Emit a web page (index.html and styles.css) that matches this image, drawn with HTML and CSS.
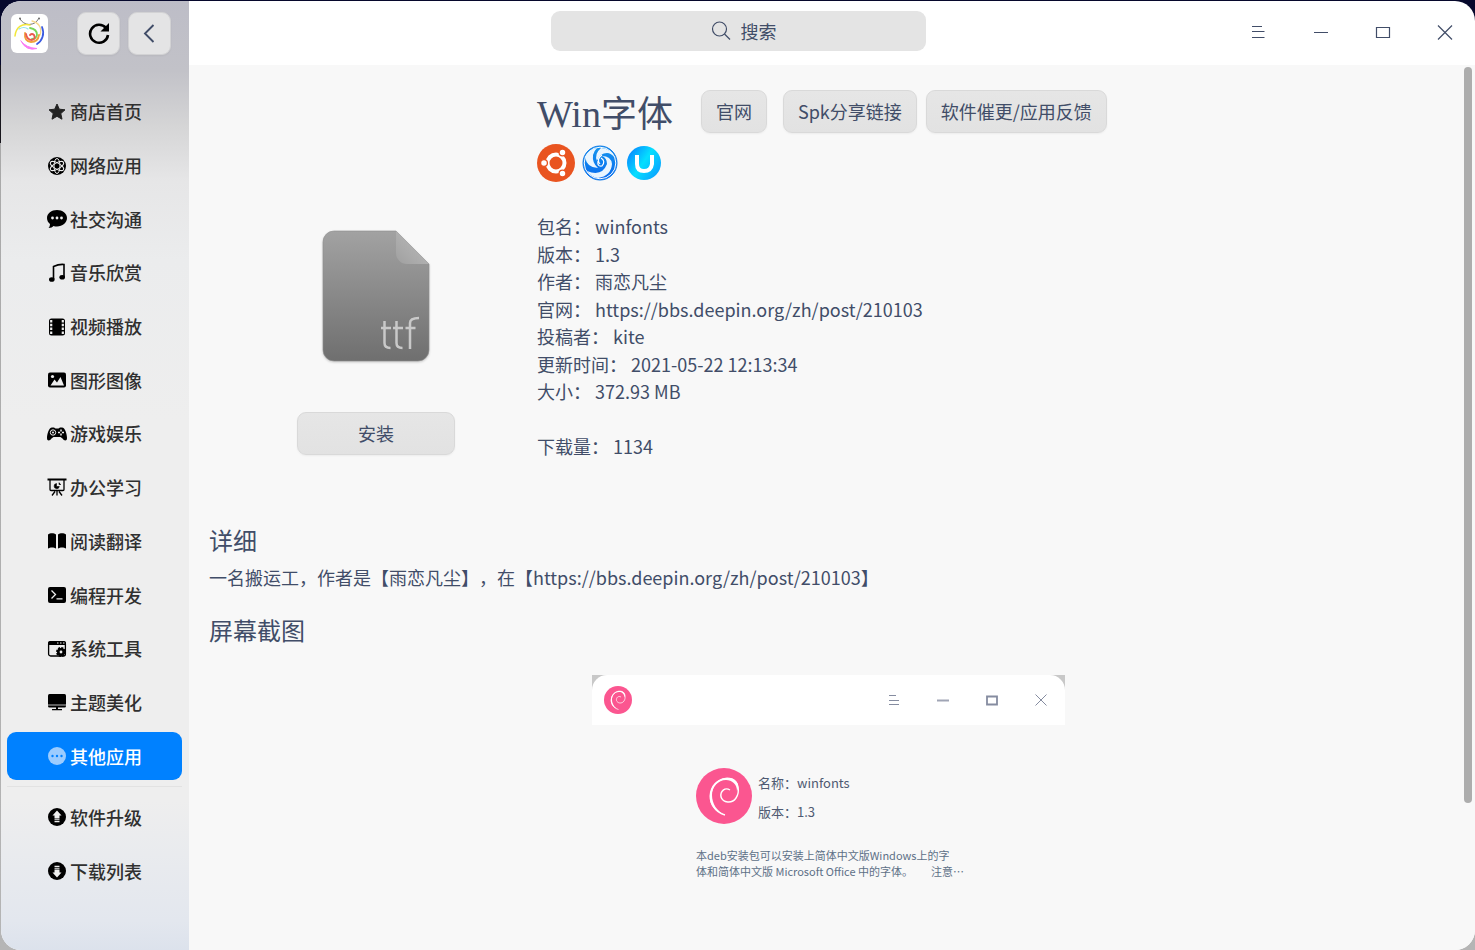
FILE: index.html
```html
<!DOCTYPE html>
<html lang="zh-CN">
<head>
<meta charset="utf-8">
<title>Win字体</title>
<link rel="stylesheet" href="styles.css">
</head>
<body>
<div class="window">
  <header class="titlebar">
    <div class="tools">
      <svg class="logo" viewBox="0 0 37 39" fill="none" stroke-linecap="round">
        <rect width="37" height="39" rx="6" fill="#fff"/>
        <path d="M9 5q3 5 9 5.500q7-.5 9-5" stroke="#777" stroke-width="1"/>
        <circle cx="9" cy="4.500" r="1" fill="#666"/><circle cx="28" cy="4.500" r="1" fill="#666"/>
        <path d="M4 22C5 13 11 9 19 11" stroke="#f2e73b" stroke-width="1.500"/>
        <path d="M21 7C29 9 31 15 29 21" stroke="#f7d98b" stroke-width="1.300"/>
        <path d="M31 13C34 20 31 27 26 30" stroke="#3c5be0" stroke-width="1.800"/>
        <path d="M8 15q5-3 9 0" stroke="#8fe3ef" stroke-width="1.200"/>
        <path d="M19 14q7 1 7 7q-1 4-5 4" stroke="#7ad65a" stroke-width="1.800"/>
        <path d="M14 19q-1 8 6 9q7 0 8-7" stroke="#f2a03c" stroke-width="1.800"/>
        <path d="M15 20q1 6 6 6q4-1 2-5q-2-2-4 0" stroke="#ea5a50" stroke-width="1.800"/>
        <path d="M10 27Q15 34 26 34.500Q15 37.500 10 27Z" fill="#f97cf4" stroke="#f97cf4" stroke-width="1"/>
      </svg>
      <button class="btn square" aria-label="刷新"><svg viewBox="0 0 24 24" width="24" height="24" fill="none" stroke="#000" stroke-width="2.600"><path d="M19 7A9 9 0 1 0 21 14"/><path d="M22 2v8.500h-8.500z" fill="#000" stroke="none"/></svg></button>
      <button class="btn square" aria-label="返回"><svg viewBox="0 0 24 24" width="24" height="24" fill="none" stroke="#414d68" stroke-width="1.900"><path d="M15.500 4L7 12.500l8.500 8.500"/></svg></button>
    </div>
    <label class="search">
      <svg viewBox="0 0 20 20" width="20" height="20" fill="none" stroke="#414d68" stroke-width="1.200"><circle cx="8.500" cy="8" r="7"/><path d="M13.500 13l5.500 5.500"/></svg>
      <input type="text" placeholder="搜索" aria-label="搜索">
    </label>
    <div class="controls">
      <button aria-label="菜单"><svg viewBox="0 0 16 16"><path d="M1 2.500h10M1 7.500h12.500M1 13.500h12.500"/></svg></button>
      <button aria-label="最小化"><svg viewBox="0 0 16 16"><path d="M1 8.500h14"/></svg></button>
      <button aria-label="最大化"><svg viewBox="0 0 16 16"><path d="M1.500 3.500h13v10h-13z"/></svg></button>
      <button aria-label="关闭"><svg viewBox="0 0 16 16"><path d="M1 1.500l14 14M15 1.500l-14 14"/></svg></button>
    </div>
  </header>

  <aside class="sidebar">
    <nav class="categories">
      <button><svg viewBox="0 0 20 20"><path fill="#222" stroke="#222" stroke-linejoin="round" d="M10 2l2.300 5.200 5.700.6-4.200 3.800 1.200 5.600L10 14.300 5 17.200l1.200-5.600L2 7.800l5.700-.6z"/></svg>商店首页</button>
      <button><svg viewBox="0 0 20 20"><circle cx="10" cy="10" r="9"/><g fill="none" stroke="#eee" stroke-width="1"><ellipse cx="10" cy="10" rx="7.500" ry="3" transform="rotate(30 10 10)"/><ellipse cx="10" cy="10" rx="7.500" ry="3" transform="rotate(90 10 10)"/><ellipse cx="10" cy="10" rx="7.500" ry="3" transform="rotate(150 10 10)"/></g></svg>网络应用</button>
      <button><svg viewBox="0 0 20 20"><path d="M10 1C4.500 1 0 4.500 0 9c0 2.500 1.200 4.500 3 6 0 1.500-.5 3-1.500 4 2.500 0 4-.8 5-2 1 .4 2.300.5 3.500.5 5.500 0 10-3.800 10-8.500S15.500 1 10 1z"/><g fill="#eee"><circle cx="5.500" cy="9" r="1.400"/><circle cx="10" cy="9" r="1.400"/><circle cx="14.500" cy="9" r="1.400"/></g></svg>社交沟通</button>
      <button><svg viewBox="0 0 20 20"><path d="M6.500 16V3.500Q12 1 17 1.500v12.500" fill="none" stroke="#000" stroke-width="1.600"/><ellipse cx="4.800" cy="16.500" rx="2.800" ry="2.300"/><ellipse cx="15.200" cy="14.200" rx="2.800" ry="2.300"/></svg>音乐欣赏</button>
      <button><svg viewBox="0 0 20 20"><rect x="2" y="1.500" width="16" height="17" rx="2.500"/><path d="M4.200 3v14M15.800 3v14" stroke="#eee" stroke-width="2.200" stroke-dasharray="2.500 1.300"/></svg>视频播放</button>
      <button><svg viewBox="0 0 20 20"><rect x="1" y="2.500" width="18" height="15" rx="2"/><path fill="#eee" d="M3.500 15.500l4-6 2.500 3 3.500-5.500 3.500 8.500z"/><circle cx="5.500" cy="6.500" r="1.600" fill="#eee"/></svg>图形图像</button>
      <button><svg viewBox="0 0 20 20"><path d="M5 3.500h2l1.500 1h3l1.500-1h2c3 0 5 6.500 5 10.500 0 3.500-3 3-4.500.5L13.500 13h-7l-2 1.500C3 17 0 17.500 0 14 0 10 2 3.500 5 3.500z"/><circle cx="6" cy="8.500" r="2.700" fill="none" stroke="#eee"/><circle cx="6" cy="8.500" r="1" fill="#eee"/><path d="M14 5.500v2M14 9.500v2M11 8.500h2M15 8.500h2" stroke="#eee" stroke-width="1.500"/></svg>游戏娱乐</button>
      <button><svg viewBox="0 0 20 20" fill="none" stroke="#000" stroke-width="1.300"><path d="M.5 1.500h19" stroke-width="2"/><path d="M3 2v9.500q0 1 1 1h12q1 0 1-1V2M10 13v4.500M8 13.500l-3 4M12 13.500l3 4"/><path d="M9.500 5.500a2.600 2.600 0 1 0 2.800 3h-2.800zM12 4.500v2h2" fill="#000" stroke-width=".6"/></svg>办公学习</button>
      <button><svg viewBox="0 0 20 20"><path d="M1 3.500C3 1.800 7 1.800 9 3.500v14c-2-1.500-6-1.500-8 0zM19 3.500c-2-1.700-6-1.700-8 0v14c2-1.500 6-1.500 8 0z"/></svg>阅读翻译</button>
      <button><svg viewBox="0 0 20 20"><rect x="1" y="2" width="18" height="16" rx="2"/><path d="M4.500 5.500l4 4-4 4M9.500 13.800h6" fill="none" stroke="#eee" stroke-width="1.300"/></svg>编程开发</button>
      <button><svg viewBox="0 0 20 20"><rect x="1.600" y="3" width="16.800" height="14" rx="2" fill="none" stroke="#000" stroke-width="1.300"/><path d="M1 6V4q0-2 2-2h14q2 0 2 2v2z"/><path d="M10 4h1.500M13 4h1.500M16 4h1.500" stroke="#eee"/><circle cx="14" cy="13" r="4" stroke="#000" stroke-width="2" stroke-dasharray="2 1.100"/><circle cx="14" cy="13" r="1.400" fill="#eee"/></svg>系统工具</button>
      <button><svg viewBox="0 0 20 20"><rect x="1" y="2" width="18" height="13.500" rx="1.500"/><path d="M1 13h18" stroke="#eee" stroke-width=".8"/><path d="M9 15h2v2h4v1.200H5V17h4z"/></svg>主题美化</button>
      <button class="active" aria-current="page"><svg viewBox="0 0 20 20"><circle cx="10" cy="10" r="9" fill="#9cccff"/><g fill="#0081ff"><circle cx="5.500" cy="10" r="1.200"/><circle cx="10" cy="10" r="1.200"/><circle cx="14.500" cy="10" r="1.200"/></g></svg>其他应用</button>
    </nav>
    <nav class="transfers">
      <button><svg viewBox="0 0 20 20"><circle cx="10" cy="10" r="9"/><path fill="#eee" d="M10 3.500l4.500 5h-2v3h-5v-3h-2zM7.500 12.200h5v1h-5zM7.500 14h5v1.200h-5z"/></svg>软件升级</button>
      <button><svg viewBox="0 0 20 20"><circle cx="10" cy="10" r="9"/><path fill="#eee" d="M10 16.500l4.500-5h-2v-3h-5v3h-2zM7.500 6.800h5v1h-5zM7.500 4.800h5V6h-5z"/></svg>下载列表</button>
    </nav>
  </aside>

  <main class="content">
    <section class="hero">
      <div class="install">
        <svg class="file-icon" viewBox="0 0 114 138">
          <defs>
            <linearGradient id="sheet" x1="0" y1="0" x2="0" y2="1"><stop offset="0" stop-color="#a2a2a2"/><stop offset="1" stop-color="#6f6f6f"/></linearGradient>
            <linearGradient id="fold" x1="0" y1="1" x2=".6" y2=".4"><stop offset="0" stop-color="#a0a0a0"/><stop offset="1" stop-color="#b2b2b2"/></linearGradient>
          </defs>
          <path d="M15 3h62l33 33v86a11 11 0 0 1-11 11H15a11 11 0 0 1-11-11V14A11 11 0 0 1 15 3z" fill="url(#sheet)" stroke="#8e8e8e" stroke-width=".6"/>
          <path d="M77 3l33 33H88a11 11 0 0 1-11-11z" fill="url(#fold)"/>
          <g fill="none" stroke="#c9c9c9" stroke-width="2.500"><path d="M65.500 93v22q0 5 6 5M62 100h10M77.500 93v22q0 5 6 5M74 100h10M91 121V95q0-5 9-5M86.500 100h10"/></g>
        </svg>
        <button class="btn">安装</button>
      </div>
      <div class="summary">
        <div class="title-row">
          <h1><span class="latin">Win</span>字体</h1>
          <div class="links"><button class="btn">官网</button><button class="btn share">Spk分享链接</button><button class="btn">软件催更/应用反馈</button></div>
        </div>
        <div class="distros">
          <svg viewBox="0 0 38 38" width="38" height="38"><circle cx="19" cy="19" r="19" fill="#e95420"/><circle cx="19" cy="19" r="8.500" fill="none" stroke="#fff" stroke-width="4"/><g fill="#fff" stroke="#e95420" stroke-width="1.300"><circle cx="7" cy="19" r="3.400"/><circle cx="25.500" cy="8.500" r="3.400"/><circle cx="25.500" cy="29.500" r="3.400"/></g></svg>
          <svg viewBox="0 0 36 36" width="36" height="36"><defs><linearGradient id="swirl" x1="0" y1="0" x2="0" y2="1"><stop offset="0" stop-color="#1597ee"/><stop offset="1" stop-color="#0768ef"/></linearGradient></defs><circle cx="18" cy="18" r="17" fill="url(#swirl)" stroke="#0f7ae8"/><circle cx="18" cy="18" r="15.800" fill="none" stroke="#fff"/><g fill="#e9f5ff"><path d="M3 12Q5 23 16 23Q10 18 11 10Q12 6 15 3Q6 5 3 12z"/><path d="M19 3Q12 9 15 16Q18 8 25 8Q29 8 33 13Q30 4 19 3z"/><path d="M5 26Q20 32 25 19Q25 13 20 11Q29 11 30 19Q29 31 16 33Q9 32 5 26z"/></g><path d="M19 13q5 3 1 8q-5 1-4-5M20 10q-6 4-2 9" fill="none" stroke="#fff" stroke-width="1.200"/></svg>
          <svg class="uos" viewBox="0 0 34 34" width="34" height="34"><defs><linearGradient id="uos" x1="0" y1="0" x2="1" y2=".7"><stop offset="0" stop-color="#0874ff"/><stop offset=".55" stop-color="#05dfff"/><stop offset="1" stop-color="#0aa5ff"/></linearGradient></defs><circle cx="17" cy="17" r="17" fill="url(#uos)"/><path d="M10 9v9q0 7 7 7t8-7V9" fill="none" stroke="#fff" stroke-width="4"/></svg>
        </div>
        <div class="facts">
          <div>包名： winfonts</div>
          <div>版本： 1.3</div>
          <div>作者： 雨恋凡尘</div>
          <div>官网： https://bbs.deepin.org/zh/post/210103</div>
          <div>投稿者： kite</div>
          <div>更新时间： 2021-05-22 12:13:34</div>
          <div>大小： 372.93 MB</div>
          <div></div>
          <div>下载量： 1134</div>
        </div>
      </div>
    </section>
    <section class="details">
      <h2>详细</h2>
      <p>一名搬运工，作者是【雨恋凡尘】，在【https://bbs.deepin.org/zh/post/210103】</p>
    </section>
    <section class="shots">
      <h2>屏幕截图</h2>
      <div class="shot">
        <div class="shot-frame">
          <div class="shot-bar">
            <svg width="28" height="28" viewBox="0 0 56 56"><use href="#debian"/></svg>
            <div class="shot-controls">
              <svg viewBox="0 0 16 16"><path d="M3 3.500h7M3 8.500h10M3 12.500h10"/></svg>
              <svg viewBox="0 0 16 16"><path d="M2 8.500h12" stroke="#a0a5b5" stroke-width="2"/></svg>
              <svg viewBox="0 0 16 16"><path d="M3 4.500h10v8H3z" stroke-width="1.800"/></svg>
              <svg viewBox="0 0 16 16"><path d="M2.500 2.500l11 11M13.500 2.500l-11 11"/></svg>
            </div>
          </div>
        </div>
        <div class="shot-body">
          <div class="shot-package">
            <svg width="56" height="56" viewBox="0 0 56 56"><g id="debian"><circle cx="28" cy="28" r="28" fill="#fb5690"/><path d="M29 47C18 44 13 34 15 25C17 14 27 8 36 11C43 14 44 24 40 30C36 36 27 35 25 29C24 23 29 19 34 22" fill="none" stroke="#fff" stroke-width="1.400"/><path d="M29 47C16 43 12 33 14 24C17 12 28 8 37 11C43 14 43 20 41 23C41 16 36 12 30 12C22 12 16 19 16 27C16 36 21 43 29 47z" fill="#fff"/></g></svg>
            <div class="shot-facts"><div>名称：winfonts</div><div>版本：1.3</div></div>
          </div>
          <p>本deb安装包可以安装上简体中文版Windows上的字<br>体和简体中文版 Microsoft Office 中的字体。<span class="note">注意…</span></p>
        </div>
      </div>
    </section>
  </main>
  <div class="scrollbar"></div>
</div>
</body>
</html>
```
FILE: styles.css
```css
* { box-sizing: border-box; }

body {
  margin: 0;
  min-height: 100vh;
  display: flex;
  padding: 1px 0 0 1px;
  background: linear-gradient(#06082c 0, #06082c 65px, #17151c 65px, #17151c 143px, #a9a9a9 143px, #b5b5b5);
  color: #414d68;
  font: 18px/27px "Noto Sans CJK SC", sans-serif;
  text-spacing-trim: space-all;
}

button, input { font: inherit; color: inherit; }
button { border: 0; padding: 0; background: none; }
svg { display: block; flex: none; }
h1, h2, p { margin: 0; font-weight: 400; }

.window {
  position: relative;
  flex: 1;
  display: grid;
  grid-template: 64px 1fr / 188px 1fr;
  border-radius: 20px;
  overflow: hidden;
  background: #fff;
}

.titlebar {
  grid-area: 1 / 1 / 2 / 3;
  z-index: 1;
  display: grid;
  grid-template-columns: 1fr 375px 1fr;
  align-items: center;
}
.tools { display: flex; align-items: center; padding-left: 10px; }
.logo { width: 37px; height: 39px; margin-right: 29px; }

.btn {
  height: 43px;
  padding: 0 14px;
  border: 1px solid #d9d9d9;
  border-radius: 9px;
  background: linear-gradient(#e6e6e6, #e2e2e2);
  box-shadow: 0 1px 2px #0000000d;
  white-space: nowrap;
}
.square { width: 43px; padding: 0; display: grid; place-items: center; background: #e4e4e5; border-color: #d2d2d4; }
.square + .square { margin-left: 8px; }

.search {
  height: 40px;
  margin-bottom: 4px;
  padding-left: 11px;
  display: flex;
  align-items: center;
  justify-content: center;
  gap: 10px;
  border-radius: 9px;
  background: #e4e4e4;
}
.search input { width: 36px; padding: 0; border: 0; outline: 0; background: none; }
.search input::placeholder { color: #414d68; opacity: 1; }

.controls { display: flex; justify-content: flex-end; gap: 22px; padding: 0 10px 2px 0; }
.controls button { width: 40px; height: 40px; display: grid; place-items: center; }
.controls svg { width: 16px; height: 16px; fill: none; stroke: #414d68; stroke-width: 1.2; }

.sidebar {
  grid-area: 1 / 1 / 3 / 2;
  padding: 87px 7px 0 6px;
  color: #303030;
  font-weight: 500;
  background: linear-gradient(#bdbdc7 0, #c2c2c8 70px, #d5d5d6 125px, #e6e6e7 180px, #ebeced 260px, #eeeeee 420px, #eeeeee 800px, #e3e7ee 920px, #dce2ec 100%);
}
.categories, .transfers { display: grid; gap: 6px; }
.categories { grid-auto-rows: 1fr; min-height: 692px; }
.transfers { grid-auto-rows: 48px; margin-top: 6px; padding-top: 6px; border-top: 1px solid #e2e2e2; }
.sidebar button { display: flex; align-items: center; justify-content: center; gap: 3px; border-radius: 9px; }
.sidebar button svg { width: 20px; height: 20px; }
.sidebar .active { background: #0081ff; color: #fff; }

.content { background: #f8f8f8; padding: 25px 27px 50px 20px; }
.hero { display: flex; gap: 82px; padding-left: 88px; }
.install { width: 158px; display: flex; flex-direction: column; align-items: center; padding-top: 138px; }
.file-icon { width: 114px; height: 138px; margin-bottom: 46px; filter: drop-shadow(0 1px 1px #0003); }
.install .btn { width: 100%; }

.title-row { display: flex; align-items: flex-start; gap: 28px; }
h1 { font-size: 36px; line-height: 42px; }
.latin { font-family: "Liberation Serif", serif; font-size: 38px; }
.links { display: flex; }
.share { margin: 0 9px 0 16px; }
.distros { display: flex; align-items: center; gap: 7px; margin-top: 9px; }
.uos { margin-left: 2px; }
.facts { display: grid; grid-auto-rows: 1fr; min-height: 248px; margin-top: 31px; }

h2 { font-size: 24px; line-height: 36px; }
.details { margin-top: 61px; }
.details p { margin-top: 6px; }
.shots { margin-top: 21px; }

.shot { width: 473px; margin: 27px auto 0; }
.shot-frame { background: #c8c8c8; }
.shot-bar {
  height: 50px;
  padding: 0 16px 0 12px;
  display: flex;
  align-items: center;
  justify-content: space-between;
  border-radius: 15px 15px 0 0;
  background: #fff;
}
.shot-controls { display: flex; gap: 33px; }
.shot-controls svg { width: 16px; height: 16px; fill: none; stroke: #858ca0; stroke-width: 1; }
.shot-body { padding: 43px 0 0 104px; font-size: 11px; line-height: 16px; color: #5d7087; }
.shot-package { display: flex; gap: 6px; font-size: 13px; line-height: 29px; color: #4f5a72; }
.shot-body p { margin-top: 21px; }
.note { margin-left: 18px; }

.scrollbar {
  position: absolute;
  top: 66px;
  right: 3px;
  width: 8px;
  height: 736px;
  border-radius: 4px;
  background: #adadad;
}
```
